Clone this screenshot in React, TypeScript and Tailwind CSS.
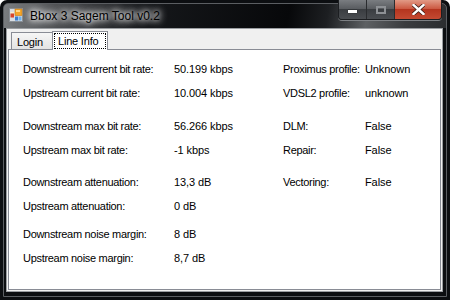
import React from 'react';

type Row = { label: string; value: string; label2?: string; value2?: string };

const groups: { mt: string; rows: Row[] }[] = [
  {
    mt: 'mt-0',
    rows: [
      { label: 'Downstream current bit rate:', value: '50.199 kbps', label2: 'Proximus profile:', value2: 'Unknown' },
      { label: 'Upstream current bit rate:', value: '10.004 kbps', label2: 'VDSL2 profile:', value2: 'unknown' },
    ],
  },
  {
    mt: 'mt-[9px]',
    rows: [
      { label: 'Downstream max bit rate:', value: '56.266 kbps', label2: 'DLM:', value2: 'False' },
      { label: 'Upstream max bit rate:', value: '-1 kbps', label2: 'Repair:', value2: 'False' },
    ],
  },
  {
    mt: 'mt-[8px]',
    rows: [
      { label: 'Downstream attenuation:', value: '13,3 dB', label2: 'Vectoring:', value2: 'False' },
      { label: 'Upstream attenuation:', value: '0 dB' },
    ],
  },
  {
    mt: 'mt-[4px]',
    rows: [
      { label: 'Downstream noise margin:', value: '8 dB' },
      { label: 'Upstream noise margin:', value: '8,7 dB' },
    ],
  },
];

function AppIcon() {
  return (
    <svg width="14" height="14" viewBox="0 0 14 14">
      <rect x="0.5" y="0.5" width="13" height="13" fill="#d9dde2" stroke="#8a9096" />
      <rect x="6" y="1" width="7" height="6.5" fill="#f3a52a" stroke="#c97a12" strokeWidth="0.6" />
      <rect x="7" y="2" width="4" height="2" fill="#ffd88a" />
      <rect x="1.5" y="4" width="3.5" height="1.5" fill="#f6f0d0" />
      <rect x="1.5" y="5.5" width="3.5" height="4" fill="#d8452b" />
      <rect x="6" y="8.5" width="3" height="4" fill="#3a7fd0" />
      <rect x="9.5" y="8.5" width="3" height="4" fill="#6fb0ea" />
    </svg>
  );
}

function CaptionButtons() {
  return (
    <div className="-mt-[4px] mr-[4px] flex h-[20px] overflow-hidden rounded-b-[4px] border border-t-0 border-[#1c1e21] shadow-[0_1px_0_#7d8084]">
      <div className="flex w-[28px] items-center justify-center border-r border-[#2a2c2f] bg-[linear-gradient(to_bottom,#7a7d81_0%,#5a5d61_45%,#3a3d41_50%,#4a4d51_100%)]">
        <div className="mt-[4px] h-[3px] w-[9px] bg-white shadow-[0_0_1px_#000]" />
      </div>
      <div className="flex w-[28px] items-center justify-center border-r border-[#2a2c2f] bg-[linear-gradient(to_bottom,#7a7d81_0%,#5a5d61_45%,#3a3d41_50%,#4a4d51_100%)]">
        <div className="h-[8px] w-[10px] border-2 border-[#8e9195]" />
      </div>
      <div className="flex w-[46px] items-center justify-center bg-[linear-gradient(to_bottom,#e29a86_0%,#cc5a43_45%,#b5351f_50%,#c44a32_100%)]">
        <svg width="13" height="11" viewBox="0 0 13 11">
          <path d="M1.5 1 L11.5 10 M11.5 1 L1.5 10" stroke="#3a1a14" strokeWidth="4" strokeLinecap="square" />
          <path d="M1.5 1 L11.5 10 M11.5 1 L1.5 10" stroke="#ffffff" strokeWidth="2.4" strokeLinecap="square" />
        </svg>
      </div>
    </div>
  );
}

export default function App() {
  return (
    <div className="h-[300px] w-[450px] rounded-t-[7px] border-[3px] border-[#0c0e11] bg-[#0c0e11] font-['Liberation_Sans',Arial,sans-serif] text-black">
      <div className="flex h-full flex-col rounded-t-[5px] border border-[#5b5e62] bg-[linear-gradient(100deg,#7b7e81_0%,#4a4c4f_12%,#15171a_30%,#07080a_58%,#1d1f22_66%,#5d6063_74%,#3a3c3f_82%,#1a1c1f_100%)]">
        <div className="flex h-[24px] shrink-0 items-start justify-between">
          <div className="flex items-start">
            <div className="ml-[5px] mt-[4px]">
              <AppIcon />
            </div>
            <span className="ml-[7px] mt-[4px] text-[12px] leading-[16px] [text-shadow:0_0_5px_#fff,0_0_8px_#fff,0_0_10px_#fff]">
              Bbox 3 Sagem Tool v0.2
            </span>
          </div>
          <CaptionButtons />
        </div>
        <div className="flex flex-1 pb-[4px] pl-[2px] pr-[3px] bg-[#0c0e11]">
          <div className="flex flex-1 flex-col border border-[#9a9da1] bg-[#f0f0f0] pb-[1px] pl-[1px] pr-[1px]">
            <div className="flex h-[20px] shrink-0 items-end pl-[3px] text-[11px] tracking-[-0.2px]">
              <div className="flex h-[17px] w-[41px] items-center border-l border-t border-[#898c95] bg-[linear-gradient(to_bottom,#f6f6f6,#e3e3e3)] pl-[5px] pt-[2px]">
                Login
              </div>
              <div className="relative z-10 -mb-px flex h-[19px] w-[56px] border-l border-r border-t border-[#898c95] bg-white">
                <div className="m-[1px] flex flex-1 items-center border border-dotted border-black pl-[3px]">
                  Line Info
                </div>
              </div>
            </div>
            <div className="flex-1 border border-[#898c95] bg-white pl-[14px] pt-[7px] text-[11px]">
              {groups.map((g, gi) => (
                <div key={gi} className={g.mt}>
                  {g.rows.map((r, ri) => (
                    <div key={ri} className="grid h-[24px] grid-cols-[151px_109px_82px_1fr] items-center leading-[24px]">
                      <span className="tracking-[-0.3px] whitespace-nowrap">{r.label}</span>
                      <span className="tracking-[-0.1px] whitespace-nowrap">{r.value}</span>
                      <span className="tracking-[-0.3px] whitespace-nowrap">{r.label2 ?? ''}</span>
                      <span className="tracking-[-0.1px] whitespace-nowrap">{r.value2 ?? ''}</span>
                    </div>
                  ))}
                </div>
              ))}
            </div>
          </div>
        </div>
      </div>
    </div>
  );
}
